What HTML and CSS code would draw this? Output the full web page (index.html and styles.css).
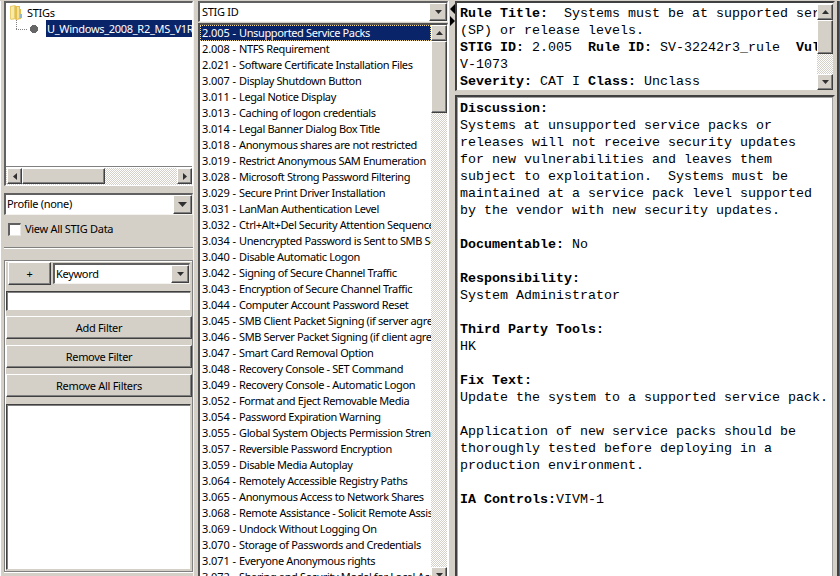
FILE: index.html
```html
<!DOCTYPE html>
<html lang="en">
<head>
<meta charset="utf-8">
<title>STIG Viewer</title>
<link rel="stylesheet" href="styles.css">
</head>
<body>
<main class="app">
  <aside class="side">
    <section class="tree">
      <div class="tree-view">
        <div class="tree-root">
          <svg class="folder" width="14" height="17" viewBox="0 0 14 17"><path d="M1 2l5-1 1 1v13l-5 1-1-1z" fill="#e9cf70"/><path d="M2 3l3-1v12l-3 1z" fill="#f8eaa9"/><path d="M6 2h5v3h1v10l-5 1-1-1z" fill="#e3bf51"/><path d="M8 3h2v11l-2 1z" fill="#f6e296"/><path d="M11 10h2v4h-2z" fill="#8fb8cf"/></svg>
          <span>STIGs</span>
        </div>
        <div class="tree-leaf">
          <svg width="30" height="18" viewBox="0 0 30 18"><path d="M8.500 0v9M8 9.500h12" fill="none" stroke="#808080" stroke-dasharray="1 1"/><path d="M25 5h4v1h1v1h1v4h-1v1h-1v1h-4v-1h-1v-1h-1V7h1V6h1z" transform="translate(-1 0)" fill="#666"/></svg>
          <span class="leaf-name">U_Windows_2008_R2_MS_V1R</span>
        </div>
      </div>
      <div class="hbar">
        <i class="sbtn"><svg width="4" height="7"><path d="M4 0v7L0 3.500z"/></svg></i>
        <i class="thumb"></i><i class="space"></i>
        <i class="sbtn"><svg width="4" height="7"><path d="M0 0v7l4-3.500z"/></svg></i>
      </div>
    </section>
    <div class="combo profile"><span>Profile (none)</span><i class="sbtn"><svg width="9" height="5"><path d="M0 0h9L4.500 5z"/></svg></i></div>
    <label class="check"><i class="box"></i><span>View All STIG Data</span></label>
    <div class="rule"></div>
    <section class="filters">
      <div class="filter-row">
        <button class="btn plus">+</button>
        <div class="combo keyword"><span>Keyword</span><i class="sbtn"><svg width="7" height="4"><path d="M0 0h7L3.500 4z"/></svg></i></div>
      </div>
      <div class="field"></div>
      <button class="btn">Add Filter</button>
      <button class="btn">Remove Filter</button>
      <button class="btn">Remove All Filters</button>
      <div class="field filter-list"></div>
    </section>
  </aside>
  <section class="middle">
    <div class="combo sort"><span>STIG ID</span><i class="sbtn"><svg width="7" height="4"><path d="M0 0h7L3.500 4z"/></svg></i></div>
    <div class="list">
      <ul class="rows">
        <li class="on"><b>2.005 -</b>Unsupported Service Packs</li>
        <li><b>2.008 -</b>NTFS Requirement</li>
        <li><b>2.021 -</b>Software Certificate Installation Files</li>
        <li><b>3.007 -</b>Display Shutdown Button</li>
        <li><b>3.011 -</b>Legal Notice Display</li>
        <li><b>3.013 -</b>Caching of logon credentials</li>
        <li><b>3.014 -</b>Legal Banner Dialog Box Title</li>
        <li><b>3.018 -</b>Anonymous shares are not restricted</li>
        <li><b>3.019 -</b>Restrict Anonymous SAM Enumeration</li>
        <li><b>3.028 -</b>Microsoft Strong Password Filtering</li>
        <li><b>3.029 -</b>Secure Print Driver Installation</li>
        <li><b>3.031 -</b>LanMan Authentication Level</li>
        <li><b>3.032 -</b>Ctrl+Alt+Del Security Attention Sequence</li>
        <li><b>3.034 -</b>Unencrypted Password is Sent to SMB Server</li>
        <li><b>3.040 -</b>Disable Automatic Logon</li>
        <li><b>3.042 -</b>Signing of Secure Channel Traffic</li>
        <li><b>3.043 -</b>Encryption of Secure Channel Traffic</li>
        <li><b>3.044 -</b>Computer Account Password Reset</li>
        <li><b>3.045 -</b>SMB Client Packet Signing (if server agrees)</li>
        <li><b>3.046 -</b>SMB Server Packet Signing (if client agrees)</li>
        <li><b>3.047 -</b>Smart Card Removal Option</li>
        <li><b>3.048 -</b>Recovery Console - SET Command</li>
        <li><b>3.049 -</b>Recovery Console - Automatic Logon</li>
        <li><b>3.052 -</b>Format and Eject Removable Media</li>
        <li><b>3.054 -</b>Password Expiration Warning</li>
        <li><b>3.055 -</b>Global System Objects Permission Strength</li>
        <li><b>3.057 -</b>Reversible Password Encryption</li>
        <li><b>3.059 -</b>Disable Media Autoplay</li>
        <li><b>3.064 -</b>Remotely Accessible Registry Paths</li>
        <li><b>3.065 -</b>Anonymous Access to Network Shares</li>
        <li><b>3.068 -</b>Remote Assistance - Solicit Remote Assistance</li>
        <li><b>3.069 -</b>Undock Without Logging On</li>
        <li><b>3.070 -</b>Storage of Passwords and Credentials</li>
        <li><b>3.071 -</b>Everyone Anonymous rights</li>
        <li><b>3.072 -</b>Sharing and Security Model for Local Accounts</li>
      </ul>
      <div class="vbar">
        <i class="sbtn"><svg width="7" height="4"><path d="M0 4h7L3.500 0z"/></svg></i>
        <i class="thumb"></i><i class="space"></i>
        <i class="sbtn"><svg width="7" height="4"><path d="M0 0h7L3.500 4z"/></svg></i>
      </div>
    </div>
  </section>
  <div class="splitter"><svg width="6" height="26" viewBox="0 0 6 26"><path d="M5 3v10L0 8zM0 15v10l5-5z"/></svg></div>
  <section class="detail">
    <div class="pane head">
      <pre><b>Rule Title:</b>  Systems must be at supported service pack
(SP) or release levels.
<b>STIG ID:</b> 2.005  <b>Rule ID:</b> SV-32242r3_rule  <b>Vuln ID:</b>
V-1073
<b>Severity:</b> CAT I <b>Class:</b> Unclass</pre>
      <div class="vbar">
        <i class="sbtn"><svg width="7" height="4"><path d="M0 4h7L3.500 0z"/></svg></i>
        <i class="thumb"></i><i class="space"></i>
        <i class="sbtn"><svg width="7" height="4"><path d="M0 0h7L3.500 4z"/></svg></i>
      </div>
    </div>
    <div class="pane text">
      <pre><b>Discussion:</b>
Systems at unsupported service packs or
releases will not receive security updates
for new vulnerabilities and leaves them
subject to exploitation.  Systems must be
maintained at a service pack level supported
by the vendor with new security updates.

<b>Documentable:</b> No

<b>Responsibility:</b>
System Administrator

<b>Third Party Tools:</b>
HK

<b>Fix Text:</b>
Update the system to a supported service pack.

Application of new service packs should be
thoroughly tested before deploying in a
production environment.

<b>IA Controls:</b>VIVM-1</pre>
    </div>
  </section>
  <div class="edge"></div>
</main>
</body>
</html>
```
FILE: styles.css
```css
* { box-sizing: border-box; }
body {
  margin: 0;
  overflow: hidden;
  background: #d4d0c8;
  color: #000;
  font: 11px/16px "Noto Sans", "Liberation Sans", sans-serif;
  letter-spacing: -0.3px;
}
.app {
  display: grid;
  grid-template-columns: 194px 4px 250px 7px 380px 5px;
  grid-template-rows: 575px;
  height: 576px;
  padding-top: 1px;
  overflow: hidden;
}
svg { display: block; }
i { display: block; flex: none; }

/* Raised and sunken 3D surfaces */
.sbtn, .thumb {
  background: #d4d0c8;
  border: 1px solid;
  border-color: #fff #404040 #404040 #fff;
  box-shadow: inset -1px -1px #808080;
}
.sbtn { display: flex; align-items: center; justify-content: center; width: 16px; height: 16px; fill: #303030; }
.space { flex: 1; }
.hbar, .vbar {
  display: flex;
  background: repeating-conic-gradient(#d4d0c8 0 25%, #fff 0 50%) 0 0 / 2px 2px;
}
.vbar { flex-direction: column; flex: none; width: 16px; }

/* Left column */
.side {
  grid-column: 1;
  display: flex;
  flex-direction: column;
  height: 575px;
  padding-left: 3px;
  border-left: 1px solid #fff;
  border-right: 1px solid #f4f3f0;
}
.tree {
  display: flex;
  flex-direction: column;
  height: 185px;
  border: 2px solid;
  border-color: #606060 #fff #fff #606060;
  border-right-width: 1px;
  border-bottom-width: 1px;
  background: #fff;
}
.tree-view { flex: 1; overflow: hidden; border-bottom: 1px solid #808080; }
.tree-root { display: flex; height: 17px; padding: 1px 0 0 3px; gap: 4px; }
.tree-root span { padding-top: 1px; }
.tree-leaf { display: flex; height: 18px; padding-left: 2px; }
.tree-leaf svg { margin-right: 8px; flex: none; }
.leaf-name { height: 17px; padding-left: 1px; background: #0a246a; color: #fff; flex: 1; overflow: hidden; white-space: nowrap; line-height: 17px; }
.hbar { height: 17px; margin-top: 1px; padding-left: 1px; }
.hbar .sbtn { height: 16px; width: 15px; }
.hbar .thumb { width: 83px; height: 16px; }

.combo {
  display: flex;
  justify-content: space-between;
  background: #fff;
  border: 2px solid;
  border-color: #606060 #e8e6e0 #f4f3f0 #606060;
  border-right-width: 1px;
  border-bottom-width: 1px;
}
.profile { height: 22px; margin-top: 7px; line-height: 18px; }
.profile span { padding-left: 1px; }
.profile .sbtn { width: 19px; height: 19px; }
.check { display: flex; gap: 4px; height: 16px; margin: 6px 0 0 4px; }
.box { width: 13px; height: 13px; margin-top: 2px; background: #fff; border: 2px solid; border-color: #606060 #e8e6e0 #e8e6e0 #606060; border-right-width: 1px; border-bottom-width: 1px; }
.rule { height: 2px; margin-top: 10px; border-top: 1px solid #808080; border-bottom: 1px solid #fff; }
.filters {
  display: flex;
  flex-direction: column;
  height: 312px;
  margin-top: 11px;
  border: 1px solid #808080;
  box-shadow: inset 1px 1px #fff, 0 1px #fff;
  padding: 1px 0 1px 1px;
}
.filter-row { display: flex; justify-content: space-between; height: 23px; padding: 0 2px 0 2px; }
.btn {
  flex: none;
  height: 23px;
  margin: 0 0 6px;
  padding: 0;
  border: 1px solid;
  border-color: #fff #404040 #404040 #fff;
  box-shadow: inset -1px -1px #808080;
  background: #d4d0c8;
  color: #000;
  font: inherit;
  line-height: 20px;
  letter-spacing: inherit;
}
.plus { width: 43px; margin: 0; }
.keyword { width: 137px; height: 21px; margin-top: 1px; line-height: 17px; }
.keyword span { padding-left: 1px; }
.keyword .sbtn { width: 18px; height: 18px; }
.field { height: 20px; margin: 6px 1px 5px 0; background: #fff; border: 1px solid; border-color: #404040 #d4d0c8 #d4d0c8 #404040; box-shadow: inset 1px 1px #808080; flex: none; }
.filter-list { flex: 1; margin: 1px 1px 0 0; }

/* Requirement list */
.middle { grid-column: 3; display: flex; flex-direction: column; min-height: 0; }
.sort { height: 21px; flex: none; line-height: 17px; }
.sort span { padding-left: 2px; }
.sort .sbtn { width: 18px; height: 18px; }
.list { display: flex; flex: 1; min-height: 0; margin: 1px 0 -7px; border: solid #505050; border-width: 2px 1px 0 2px; border-right-color: #fff; background: #fff; }
.rows { flex: 1; min-width: 0; margin: 0; padding: 0; overflow: hidden; list-style: none; letter-spacing: -0.37px; }
.rows li { height: 16px; padding-left: 2px; white-space: nowrap; overflow: hidden; }
.rows b { display: inline-block; width: 37px; font-weight: 400; letter-spacing: -0.1px; }
.rows .on { background: #0a246a; color: #fff; outline: 1px dotted #f5db95; outline-offset: -1px; }
.list .thumb { height: 72px; }

.splitter { grid-column: 4; padding-left: 1px; border-left: 1px solid #fff; fill: #000; }

/* Rule text */
.detail { grid-column: 5; display: flex; flex-direction: column; min-width: 0; min-height: 0; }
.pane { display: flex; background: #fff; border: 2px solid; border-color: #404040 #d4d0c8 #d4d0c8 #404040; overflow: hidden; }
.head { flex: none; height: 90px; border-bottom-width: 1px; }
.text { flex: 1; margin-top: 4px; border-bottom: 0; box-shadow: inset 1px 1px #a0a0a0, inset -1px 0 #a0a0a0; }
pre { flex: 1; min-width: 0; margin: 0; padding: 2px 0 0 3px; overflow: hidden; font: 13.333px/17px "Liberation Mono", monospace; letter-spacing: 0; }
.text pre { padding-top: 3px; }
.head .vbar { margin-top: 1px; }
.head .thumb { height: 34px; }
.edge { grid-column: 6; margin-left: 2px; background: #404040; border-right: 1px solid #3a6ea5; }
```
